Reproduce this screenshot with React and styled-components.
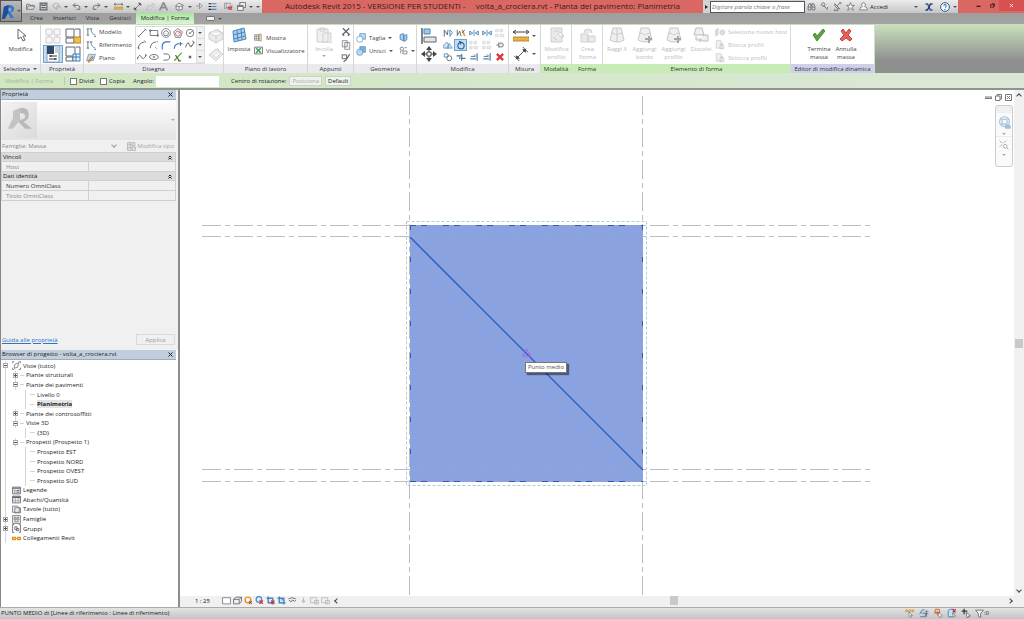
import styled, { createGlobalStyle } from "styled-components";

const GlobalStyle = createGlobalStyle`
  * {
    box-sizing: border-box;
  }

  html, body, #root {
    height: 100%;
  }

  body {
    margin: 0;
    overflow: hidden;
    font-family: "Open Sans", "Noto Sans", sans-serif;
    font-size: 6px;
    line-height: 8px;
    color: #333;
  }

  button, input, select {
    font: inherit;
    color: inherit;
    margin: 0;
    padding: 0;
    border: 0;
    background: none;
  }

  ul, h2 {
    margin: 0;
    padding: 0;
    font: inherit;
    list-style: none;
  }
`;

const blue = "#4a86bb";
const dark = "#60666f";
const ghost = "#cfcfcf";

// Every drawing sits in a 16 x 16 box
const drawings = {
  open: <path d="M1 13V4h5l1 2h6v2M1 13l3-6h12l-3 6z" fill="#ddd" stroke={dark} strokeWidth="1.3" />,
  save: (
    <g fill="none" stroke={dark} strokeWidth="2">
      <path d="M2 2h12v12H2z" />
      <path d="M5 2v4h6V2M4 10h8" />
    </g>
  ),
  sync: (
    <g fill="none" stroke="#aaa" strokeWidth="1.5">
      <path d="M2 4l5-2 5 2v5l-5 3-5-3z" />
      <path d="M9 14a4 4 0 1 1 6-3" />
    </g>
  ),
  undo: <path d="M6 2L2 6l4 4M2 6h8q5 0 4 7H8" fill="none" stroke={dark} strokeWidth="1.6" />,
  redo: <path d="M10 2l4 4-4 4M14 6H6q-5 0-4 7h6" fill="none" stroke={dark} strokeWidth="1.6" />,
  ruler: (
    <g>
      <path d="M0 4h16M3 2L0 4l3 2M13 2l3 2-3 2" fill="none" stroke="#444" />
      <path d="M0 9h16v4H0z" fill="#eab142" stroke="#b48a3a" />
    </g>
  ),
  dimension: (
    <g stroke="#444" fill="#444">
      <path d="M2 14L14 2M0 10l6 6M10 0l6 6" />
      <path d="M3 13v-3l3 3zM13 3v3l-3-3z" />
    </g>
  ),
  tag: <path d="M1 14l3-8 4 2 4-6 3 4-5 4-2 4-4-1z" fill="#ddd" stroke="#aaa" />,
  letter: <path d="M1 15L8 1l7 14M4 10h8" fill="none" stroke="#8d8d8d" strokeWidth="3" />,
  house: <path d="M1 7l6-5 8 4-2 1v6l-6 2-5-2V7zM7 8v6M2 7l5 1 6-1" fill="#eee" stroke={dark} strokeWidth="1.3" />,
  section: <path d="M8 2l5 5-5 5M8 2v10M2 7h6" fill="none" stroke="#8a8a8a" strokeWidth="1.5" />,
  thin: (
    <g strokeWidth="2">
      <path d="M1 3h5M1 8h5M1 13h5" stroke="#222" />
      <path d="M7 3h8M7 8h8M7 13h8" stroke={blue} />
    </g>
  ),
  closeHidden: (
    <g>
      <path d="M1 12V2h10v9H1M4 2v8h10V5" fill="#eee" stroke={dark} />
      <path d="M8 8l6 6M14 8l-6 6" stroke="#d43b3b" strokeWidth="2.5" />
    </g>
  ),
  windows: <path d="M5 6V1h10v9h-4M1 6h10v9H1zM1 8h10" fill="#f5f5f5" stroke={dark} strokeWidth="1.5" />,
  binoculars: <path d="M2 14V8l2-5h3v11zM9 14V3h3l2 5v6zM7 6h2M2 9h5M9 9h5" fill="#ddd" stroke={dark} strokeWidth="1.5" />,
  key: <path d="M6 6l8 8M12 12l2-3M4 2a3 3 0 1 1 0 5 3 3 0 0 1 0-5z" fill="none" stroke={dark} strokeWidth="1.5" />,
  satellite: <path d="M3 3q0 8 9 9zM7 7l5-5M4 12l-2 3h7l-1-3M11 1h3v3" fill="none" stroke={dark} strokeWidth="1.4" />,
  star: <path d="M8 1l2 5h5l-4 3 2 6-5-4-5 4 2-6-4-3h5z" fill="#f4f4f4" stroke={dark} strokeWidth="1.3" />,
  person: <path d="M8 1a4 4 0 0 1 2 7q5 1 5 6H1q0-5 5-6a4 4 0 0 1 2-7z" fill="#f2f2f2" stroke={dark} strokeWidth="1.3" />,
  exchange: (
    <g fill="none" strokeWidth="3">
      <path d="M1 2h4l6 12h4" stroke="#2a5f9f" />
      <path d="M15 2h-4L5 14H1" stroke="#27405e" />
    </g>
  ),
  help: (
    <g fill="none" stroke="#2e5f96" strokeWidth="1.6">
      <circle cx="8" cy="8" r="7" fill="#f4f8fc" />
      <path d="M6 6q0-2 2-2t2 2-2 3M8 11v2" />
    </g>
  ),
  cursor: <path d="M5 2v10l3-2 2 4 2-1-2-4h3z" fill="#fff" stroke={dark} />,
  typeProps: (
    <g>
      <path d="M1 1h8v8H1zM10 1h5v12h-5M1 10h8v5H1z" fill="#fafafa" stroke={dark} />
      <path d="M9 9h7v6H9z" fill="#f0bd45" stroke="#ba8629" />
    </g>
  ),
  family: (
    <g>
      <path d="M1 1h9v9H1zM11 1h4v7M1 11h7v4H1z" fill="#fafafa" stroke={dark} />
      <path d="M8 8h7v7H8zM8 11h7M11 8v7" fill="#e9f3fd" stroke="#3a7cb8" />
    </g>
  ),
  pasteType: <path d="M1 1h6v6H1zM9 1h6v6H9zM1 9h6v6H1zM9 9h6v6H9zM7 4h2M4 7v2M12 7v2" fill="#f7f7f7" stroke={ghost} />,
  properties: (
    <g>
      <path d="M2 0h12v16H2z" fill="#fff" stroke="#8ca2b8" />
      <path d="M2 0h7v8H2z" fill="#2f4864" />
      <path d="M10 2h3M10 4h3M10 6h3" stroke="#8ca2b8" />
      <path d="M4 10h8M4 13h8M6 9v2M10 12v2" stroke="#333" strokeWidth="1.2" />
    </g>
  ),
  modelLine: (
    <g fill="none" strokeWidth="1.4">
      <path d="M3 3v10M1 3h4M1 13h4" stroke={dark} />
      <path d="M8 3q0 8 7 10" stroke={blue} />
      <path d="M6 3h4M13 15h3" stroke={dark} />
    </g>
  ),
  plane: (
    <g>
      <path d="M4 2h11l-3 10H1z" fill="#bdd9ef" stroke={blue} />
      <path d="M3 14l7-9 2 2-7 8z" fill="#f0a13a" stroke="#a8691c" />
    </g>
  ),
  line: <path d="M2 14L14 2M1 12l3 3M12 1l3 3" stroke={dark} strokeWidth="1.5" />,
  rect: <path d="M2 4h12v8H2zM1 3h2v2H1zM13 11h2v2h-2z" fill="none" stroke={dark} strokeWidth="1.3" />,
  polyIn: <path d="M8 1a7 7 0 1 1-.1 0zM8 4l4 3-1 5H5L4 7zM8 8v1" fill="none" stroke={dark} strokeWidth="1.2" />,
  polyOut: (
    <g fill="none" strokeWidth="1.2">
      <path d="M8 1l7 5-3 9H4L1 6z" stroke={dark} />
      <circle cx="8" cy="9" r="4" stroke="#b55" />
      <path d="M8 9l4-3" stroke="#b55" />
    </g>
  ),
  circle: (
    <g fill="none" stroke={dark} strokeWidth="1.3">
      <circle cx="8" cy="8" r="6" />
      <path d="M7 9l6-5M6 8h2v2" />
    </g>
  ),
  arc: <path d="M2 14q0-9 10-11M1 12h2v3M12 1l2 3" fill="none" stroke={dark} strokeWidth="1.5" />,
  arcCenter: <path d="M2 13q1-9 9-10M10 12h1M12 14h1M13 2v2" fill="none" stroke={dark} strokeWidth="1.5" />,
  arcTangent: <path d="M2 15V9q1-6 7-6h6" fill="none" stroke="#2f7bb8" strokeWidth="1.8" />,
  fillet: (
    <g fill="none" strokeWidth="1.8">
      <path d="M2 14q0-8 8-8" stroke="#2f7bb8" />
      <path d="M10 6h5M12 3v6" stroke="#2f7bb8" />
    </g>
  ),
  spline: <path d="M1 12q3-12 6-4t7-5M12 1l3 4M5 5h2M9 9h2" fill="none" stroke={dark} strokeWidth="1.5" />,
  wave: <path d="M1 10q3-8 6-2t8-3M1 9v3M14 3v4" fill="none" stroke={dark} strokeWidth="1.5" />,
  ellipse: <path d="M8 4a7 4 0 1 1-.1 0zM8 7v2M6 8h4" fill="none" stroke={dark} strokeWidth="1.4" />,
  semi: <path d="M4 3h3q7 0 7 5t-7 5H4" fill="none" stroke={dark} strokeWidth="1.5" />,
  pick: (
    <g fill="none" strokeWidth="2">
      <path d="M2 14L14 1" stroke="#62a33e" />
      <path d="M4 5l6 9M8 14h5" stroke="#4c7c39" />
    </g>
  ),
  point: <path d="M6 6h4v4H6z" fill={dark} />,
  face: <path d="M1 5l7-3 7 3v6l-7 4-7-4zM1 5l7 3 7-3M8 8v7M9 1l4 3" fill="#ececec" stroke={ghost} />,
  facePlane: <path d="M1 9l7-6 7 5-7 7zM9 2l3 3M5 9l3 3 4-4" fill="#ececec" stroke={ghost} />,
  grid: (
    <g>
      <path d="M2 4l11-3 2 11-12 3z" fill="#a9d0ee" stroke={blue} />
      <path d="M2 8l12-3M3 12l11-3M6 3l1 11M10 2l1 11" stroke={blue} />
    </g>
  ),
  show: (
    <g>
      <path d="M1 3h10v10H1zM1 6h10M1 10h10M4 3v10M8 3v10" fill="#fff" stroke={dark} />
      <path d="M9 2h4v12H9z" fill="#f4d898" stroke="#8b7f68" />
    </g>
  ),
  viewer: (
    <g>
      <path d="M1 2h14v12H1z" fill="#fff" stroke={dark} strokeWidth="1.5" />
      <path d="M4 4l8 8M12 4l-8 8" stroke="#3e9f62" strokeWidth="3" />
    </g>
  ),
  paste: <path d="M1 2h11v13H1zM4 1h5v3H4zM7 6h8v10H7z" fill="#efefef" stroke={ghost} />,
  cut: <path d="M3 2l10 10M13 2L3 12M2 11l3 3M11 14l3-3" stroke={dark} strokeWidth="2" />,
  copy: <path d="M2 1h8v10H2zM6 4h8v11H6z" fill="#f2f2f2" stroke={dark} />,
  match: (
    <g strokeWidth="2" fill="none">
      <path d="M2 3h7v6H2z" stroke="#888" />
      <path d="M14 2L8 11l-4 3" stroke={dark} />
    </g>
  ),
  cutGeometry: (
    <g stroke={blue}>
      <path d="M6 1h9v9H6z" fill="#b8d9f1" />
      <circle cx="6" cy="10" r="5" fill="#fff" />
    </g>
  ),
  join: (
    <g stroke={blue}>
      <path d="M6 1h9v9H6z" fill="#79b4e0" />
      <circle cx="6" cy="10" r="5" fill="#b8d9f1" />
    </g>
  ),
  split: <path d="M2 3l6-2v13l-6-3zM9 4l5-1v9l-5 3z" fill="#a8cde9" stroke={blue} strokeWidth="1.5" />,
  paint: <path d="M2 5a3 3 0 0 1 6 0 3 3 0 0 1-6 0zM7 9h7v5H7zM10 3h4M3 9v4" fill="none" stroke={dark} strokeWidth="1.3" />,
  align: (
    <g>
      <path d="M1 0v16" stroke="#333" strokeWidth="1.2" />
      <path d="M3 1h6v5H3z" fill="#9dcaef" stroke={blue} />
      <path d="M3 9h12v5H3z" fill="#e5e5e5" stroke={dark} />
    </g>
  ),
  move: (
    <g fill="#444">
      <path d="M8 0l3 4H5zM8 16l3-4H5zM0 8l4-3v6zM16 8l-4-3v6z" />
      <path d="M8 4v8M4 8h8" stroke="#444" />
      <path d="M6 6h4v4H6z" fill="#fff" stroke="#444" />
    </g>
  ),
  offset: (
    <g fill="none" strokeWidth="1.5">
      <path d="M2 14V3l5 8 1-8" stroke={dark} />
      <path d="M11 14V3l4 4-3 5" stroke={blue} />
    </g>
  ),
  mirrorPick: (
    <g fill="none" strokeWidth="1.5">
      <path d="M2 3v9l4-7 2 8" stroke={dark} />
      <path d="M10 3l4 10" stroke="#db9d32" strokeWidth="2.5" />
      <path d="M14 3l-4 5" stroke={dark} />
    </g>
  ),
  mirror: <path d="M1 5l5 3-5 3zM15 5l-5 3 5 3zM8 3v10" fill="#d6e9f9" stroke={blue} strokeWidth="1.4" />,
  array: <path d="M1 2h4v4H1zM8 2h4v4H8zM8 10h6v4H8zM1 10h4v4H1z" fill="#eee" stroke={ghost} />,
  copyTool: <path d="M1 13V8l5-5 3 5v5zM6 13l4-8 5 8z" fill="#cfe3f4" stroke={blue} />,
  rotate: (
    <g fill="none" stroke="#205f98" strokeWidth="1.7">
      <circle cx="8" cy="9" r="5" />
      <path d="M5 2l4 2-3 3" />
    </g>
  ),
  pin: <path d="M2 8h4M6 4v8M6 5h6q3 3 0 6H6" fill="#eee" stroke={dark} strokeWidth="1.3" />,
  scale: (
    <g fill="none" strokeWidth="1.4">
      <path d="M2 3h6v5H2z" stroke={blue} />
      <circle cx="10" cy="10" r="4" stroke={dark} />
    </g>
  ),
  trim: (
    <g fill="none" strokeWidth="2">
      <path d="M1 6h9M9 10h6" stroke={dark} />
      <path d="M9 3v11M6 11V8" stroke={blue} />
    </g>
  ),
  trimCorner: (
    <g fill="none" strokeWidth="2">
      <path d="M13 2v12M2 11h9" stroke={blue} />
      <path d="M3 7h7M8 4l3 3" stroke={dark} strokeWidth="1.5" />
    </g>
  ),
  remove: <path d="M3 3l10 10M13 3L3 13" stroke="#dc3438" strokeWidth="3.5" />,
  editProfile: <path d="M2 1h11v14H2zM5 4h5M9 7l4 4 2-2-4-4zM4 10l4 3" fill="#e9e9e9" stroke={ghost} />,
  createForm: <path d="M4 6a4 4 0 1 1 8 0M1 7h7v8H1zM8 9h7v6H8z" fill="#e9e9e9" stroke={ghost} />,
  form: <path d="M4 1h8l3 12q-7 4-14 0zM3 6q5 3 10 0M8 2v13" fill="#efefef" stroke="#c8c8c8" />,
  formAdd: (
    <g>
      <path d="M4 1h8l3 12q-7 4-14 0zM3 6q5 3 10 0" fill="#efefef" stroke="#c8c8c8" />
      <path d="M12 9v7M8 12h7" stroke="#a5a5a5" strokeWidth="2" />
    </g>
  ),
  dissolve: <path d="M3 1h6l2 7H1zM9 8h6v6H9M3 9v4h5M6 11l3 2-3 2" fill="#efefef" stroke="#bdbdbd" />,
  host: <path d="M1 5l4-3v10l-4 2zM8 8a4 4 0 1 0 7-2 4 4 0 0 0-7 2z" fill="#ddd" stroke="#c4c4c4" />,
  lock: <path d="M2 1h7l2 3v9H2zM8 8h6v6H8zM9 8V6h3v2" fill="#f0f0f0" stroke="#c4c4c4" />,
  check: <path d="M2 8l4 6L14 4l-2-2-6 7-2-3z" fill="#5aa33f" stroke="#4a8c36" />,
  cancel: <path d="M3 4l2-2 3 4 3-4 2 2-3 4 4 4-2 2-4-3-4 3-2-2 4-4z" fill="#e8605c" stroke="#c8403d" />,
  editType: <path d="M1 1h6v14H1zM9 1h5v6H9zM9 9h6v6H9zM1 5h6M1 10h6" fill="#e5e5e5" stroke="#999" />,
  views: (
    <g fill="none" stroke={dark} strokeWidth="1.3">
      <path d="M5 6l7-3-2 8-6 2z" />
      <path d="M1 4V1h3M12 1h3v3M1 12v3h3M15 12v3h-3" />
    </g>
  ),
  legend: (
    <g>
      <path d="M1 2h14v12H1z" fill="#e9e9ee" stroke={dark} strokeWidth="1.5" />
      <path d="M1 4h14M4 8h2M8 8h5M4 11h2M8 11h5" stroke={dark} strokeWidth="2" />
    </g>
  ),
  schedule: (
    <g>
      <path d="M1 2h14v12H1z" fill="#f4f4f4" stroke={dark} strokeWidth="1.5" />
      <path d="M1 4h14" stroke={dark} strokeWidth="3" />
      <path d="M1 10h14M6 4v10M11 4v10" stroke="#888" />
    </g>
  ),
  sheet: <path d="M1 2h9l3 3v8H1zM5 5h10v9H5z" fill="#ececf0" stroke={dark} strokeWidth="1.3" />,
  families: <path d="M1 1h14v14H1zM4 4h3v5H4zM9 4h3v5H9zM4 12h8" fill="#f4f4f4" stroke={dark} strokeWidth="1.3" />,
  groups: <path d="M4 1H1v14h3M12 1h3v14h-3M5 5h4v5H5zM8 8h4v4H8z" fill="none" stroke={dark} strokeWidth="1.5" />,
  link: <path d="M1 6h5v4H1zM10 6h5v4h-5zM6 8h4" fill="#f7d083" stroke="#d9952c" strokeWidth="2" />,
  detail: <path d="M1 3h14v11H1z" fill="#fff" stroke={dark} strokeWidth="1.3" />,
  box3d: <path d="M1 6h10v8H1zM1 6l4-4h10v8l-4 4M11 6l4-4" fill="#eee" stroke={dark} strokeWidth="1.5" />,
  sun: (
    <g>
      <circle cx="7" cy="7" r="5" fill="#fff" stroke="#e5902b" strokeWidth="2.500" />
      <path d="M9 9l5 5M14 9l-5 5" stroke="#b65a1b" strokeWidth="2" />
    </g>
  ),
  shadow: (
    <g>
      <circle cx="7" cy="6" r="5" fill="#d9ecfa" stroke={blue} strokeWidth="2" />
      <path d="M8 8l6 6M14 8l-6 6" stroke="#cf3340" strokeWidth="2.5" />
    </g>
  ),
  crop: (
    <g fill="none">
      <path d="M4 1v11h11M1 4h11v11" stroke={blue} strokeWidth="2.5" />
      <path d="M9 8l6 6M15 8l-6 6" stroke="#cf3340" strokeWidth="2" />
    </g>
  ),
  cropView: (
    <g fill="none">
      <path d="M4 1v11h11M1 4h11v11" stroke={blue} strokeWidth="2.5" />
      <path d="M7 8a3 3 0 1 1 1 4" stroke="#5a96cc" strokeWidth="2" />
    </g>
  ),
  glasses: <path d="M1 5q6-4 13 0M2 7q3 6 6 0 4 5 6 0" fill="none" stroke={dark} strokeWidth="1.6" />,
  bulb: <path d="M8 3v7M5 8l3 4 3-4" fill="none" stroke="#aaa" strokeWidth="1.5" />,
  ghostBox: <path d="M1 3h11v9H1zM8 8h7v6H8z" fill="#eee" stroke="#b5b5b5" strokeWidth="1.4" />,
  selectLinks: (
    <g>
      <path d="M1 3h3v3H1zM6 3h3v3H6zM11 3h3v3h-3z" fill="#f3c14c" stroke="#c5952f" />
      <path d="M6 6l6 6-3 0 1 3-3-1z" fill="#fff" stroke={dark} />
    </g>
  ),
  selectUnder: (
    <g fill="none">
      <path d="M1 10l4-7h4M2 14h8V8H4" stroke={blue} strokeWidth="1.6" />
      <path d="M10 5h5M10 9h5M12 5v9" stroke={dark} strokeWidth="1.3" />
    </g>
  ),
  selectPin: (
    <g>
      <path d="M4 2h6l1 5H3zM7 7v5M2 8h9" fill="#f6c4a0" stroke="#b8602a" strokeWidth="1.3" />
      <path d="M9 7l6 6h-3l-1 3-2-3z" fill="#fff" stroke={dark} />
    </g>
  ),
  selectFace: (
    <g>
      <path d="M2 4l3-2h6v9l-3 3H2z" fill="#c5dff5" stroke={blue} strokeWidth="1.5" />
      <path d="M9 2l5 5M14 2L9 7" stroke="#cf3340" strokeWidth="2" />
      <path d="M9 8l5 5h-3l-1 2z" fill="#fff" stroke={dark} />
    </g>
  ),
  drag: (
    <g fill="none" stroke="#333">
      <path d="M5 1v9M1 5h9" strokeWidth="2" />
      <path d="M9 7l6 6h-3l-1 3-2-3z" fill="#fff" />
    </g>
  ),
  filter: <path d="M1 2h14l-5 6v7l-4-2V8z" fill="#f3f3f3" stroke={dark} strokeWidth="1.5" />,
  wheel: (
    <g fill="none">
      <path d="M8 1a6 6 0 1 0 0 12 6 6 0 0 0 0-12zM5 4h6v6H5z" stroke="#9bbcd6" strokeWidth="1.3" />
      <path d="M9 12h6v3H9z" fill="#a9c7de" stroke="#8fb0ca" />
    </g>
  ),
  zoom: <path d="M1 1l4 4M11 1L7 5M1 11l4-4M10 7a3 3 0 1 1-.1 0zM12 12l3 3" fill="none" stroke="#999" strokeWidth="1.3" />,
  revit: (
    <g>
      <path d="M3 3l5-2q6 0 6 4 0 3-4 4l4 6h-4L7 9v-1h1q3 0 3-2 0-2-3-2z" fill="#2e7bd3" />
      <path d="M3 3l5-2v8l-4 7H1z" fill="#1c4f9c" />
    </g>
  ),
  revitGrey: (
    <g>
      <path d="M4 3l5-2q4 0 4 4 0 3-3 4l5 4h-4L6 8q5 0 5-2t-3-2z" fill="#b9b9b9" />
      <path d="M4 3l4-2v7l-4 5H1l3-6z" fill="#c3c3c3" />
    </g>
  ),
};

const Glyph = styled.svg`
  display: block;
  flex: none;
  width: ${({ $size }) => $size}px;
  height: ${({ $size }) => $size}px;
`;

const Icon = ({ name, size = 10 }) => (
  <Glyph viewBox="0 0 16 16" $size={size} aria-hidden="true">
    {drawings[name]}
  </Glyph>
);

const Caret = styled.span`
  flex: none;
  width: 0;
  height: 0;
  border: 2px solid transparent;
  border-top-color: ${({ $muted }) => ($muted ? "#aaa" : "#555")};
  border-bottom: 0;
`;

const Window = styled.div`
  display: flex;
  flex-direction: column;
  height: 100%;
  background: #f0f0f0;
`;

/* ---------- title bar and tabs ---------- */

const Header = styled.header`
  flex: none;
  display: grid;
  grid-template-columns: 22px 1fr;
  grid-template-rows: 13px 11px;
  background: linear-gradient(#979797, #a4a4a4);
`;

const AppButton = styled.button`
  grid-row: 1 / 3;
  display: flex;
  align-items: center;
  justify-content: center;
  height: 22px;
  gap: 1px;
  border: 1px solid #555;
  background: linear-gradient(#b9b9b9, #909090);
`;

const TitleBar = styled.div`
  display: flex;
  background: #d96862;
`;

const QuickAccess = styled.div`
  display: flex;
  width: 240px;
  padding-left: 2px;
  background: linear-gradient(#ececec, #c6c6c6);
`;

const QuickButton = styled.button`
  display: flex;
  align-items: center;
  justify-content: center;
  width: ${({ $arrow }) => ($arrow ? 7 : 13)}px;
  margin-left: ${({ $gap }) => $gap || 0}px;
`;

const Title = styled.div`
  flex: 1;
  text-align: center;
  font-size: 8px;
  line-height: 12px;
  color: #3a1a1c;
  white-space: pre;
`;

const SearchBox = styled.div`
  display: flex;
  align-items: center;
  width: 102px;
  gap: 2px;
  background: #d2d2d2;
`;

const SideCaret = styled.span`
  margin-left: 2px;
  border: 2px solid transparent;
  border-left: 3px solid #222;
  border-right: 0;
`;

const SearchInput = styled.input`
  flex: 1;
  min-width: 0;
  height: 12px;
  padding: 0 1px;
  border: 1px solid #555;
  background: #fff;
  font-style: italic;

  &::placeholder {
    color: #777;
    opacity: 1;
  }
`;

const InfoCenter = styled.div`
  display: flex;
  align-items: center;
  width: 153px;
  background: linear-gradient(#ececec, #c6c6c6);
`;

const SignIn = styled.button`
  flex: 1;
  display: flex;
  align-items: center;
  justify-content: space-between;
  padding: 0 4px 0 0;
  color: #222;
`;

const WindowControls = styled.div`
  display: flex;
  justify-content: flex-end;
  width: 66px;
`;

const ControlButton = styled.button`
  display: flex;
  align-items: center;
  justify-content: center;
  width: ${({ $close }) => ($close ? 25 : 14)}px;
  height: 11px;
  color: ${({ $close }) => ($close ? "#fff" : "#3a1a1c")};
  background: ${({ $close }) => ($close ? "#d5504f" : "none")};

  svg {
    width: 5px;
    height: 5px;
    fill: none;
    stroke: currentColor;
    stroke-width: 2;
  }
`;

const Tabs = styled.nav`
  display: flex;
  align-items: stretch;
  padding-left: 3px;
`;

const Tab = styled.button`
  display: flex;
  padding: 1px 5px 0;
  color: ${({ $active }) => ($active ? "#222" : "#2a2a2a")};
  background: ${({ $active }) => ($active ? "linear-gradient(#a7e69a, #dff3d8)" : "none")};
`;

const TabMenu = styled.button`
  display: flex;
  align-items: center;
  gap: 3px;
  margin-left: 12px;

  i {
    width: 9px;
    height: 5px;
    border: 1px solid #777;
    border-radius: 1px;
    background: #eee;
  }
`;

/* ---------- ribbon ---------- */

const Ribbon = styled.div`
  flex: none;
  display: flex;
  height: 49px;
  border-top: 1px solid #c5dfba;
  background: linear-gradient(#c8dfbc, #8f8f8f 75%);
`;

const tones = {
  plain: "#e9e9ee",
  green: "#c7ecb5",
  violet: "#cdd0e8",
};

const PanelBox = styled.section`
  display: flex;
  flex-direction: column;
  width: ${({ $width }) => $width}px;
  border-right: 1px solid ${({ $tone }) => ($tone === "plain" ? "#d5d5d5" : "#cfe0c8")};
  background: #fff;
`;

const PanelBody = styled.div`
  flex: 1;
  display: flex;
  align-items: flex-start;
  padding: 0 2px;
  gap: ${({ $gap }) => $gap || 0}px;
`;

const PanelTitle = styled.h2`
  height: 9px;
  display: flex;
  align-items: center;
  justify-content: center;
  gap: 3px;
  background: ${({ $tone }) => tones[$tone]};
  white-space: nowrap;
`;

const Panel = ({ title, width, tone = "plain", gap, menu, children }) => (
  <PanelBox $width={width} $tone={tone}>
    <PanelBody $gap={gap}>{children}</PanelBody>
    <PanelTitle $tone={tone}>
      {title}
      {menu && <Caret />}
    </PanelTitle>
  </PanelBox>
);

const BigButton = styled.button`
  display: flex;
  flex-direction: column;
  align-items: center;
  width: ${({ $width }) => $width}px;
  flex: none;
  padding-top: 2px;
  gap: 2px;
  color: ${({ disabled }) => (disabled ? "#bbb" : "#444")};

  span {
    white-space: pre;
  }
`;

const Big = ({ icon, label, width, disabled, menu }) => (
  <BigButton $width={width} disabled={disabled}>
    <Icon name={icon} size={16} />
    {label && <span>{label}</span>}
    {menu && <Caret $muted={disabled} />}
  </BigButton>
);

const Stack = styled.div`
  display: flex;
  flex-direction: column;
  padding-top: ${({ $top }) => $top}px;
`;

const SmallButton = styled.button`
  display: flex;
  align-items: center;
  height: 13px;
  gap: 3px;
  white-space: nowrap;
  color: ${({ disabled }) => (disabled ? "#c0c0c0" : "#444")};
`;

const Small = ({ icon, label, disabled, menu, size = 10 }) => (
  <SmallButton disabled={disabled} aria-label={label || icon}>
    <Icon name={icon} size={size} />
    {label}
    {menu && <Caret $muted={disabled} />}
  </SmallButton>
);

const ToolGrid = styled.div`
  display: grid;
  grid-template-columns: repeat(${({ $columns }) => $columns}, ${({ $cell }) => $cell}px);
  grid-auto-rows: ${({ $row }) => $row}px;
  padding-top: 2px;
`;

const Tool = styled.button`
  display: flex;
  align-items: center;
  justify-content: center;
  border: 1px solid ${({ $on }) => ($on ? "#6fa3cf" : "transparent")};
  background: ${({ $on }) => ($on ? "#c3dcf2" : "none")};
`;

const Gallery = styled.div`
  display: flex;
  margin-top: 1px;
  border: 1px solid #dcdcdc;

  ${ToolGrid} {
    padding-top: 0;
  }
`;

const GalleryScroll = styled.div`
  display: grid;
  width: 8px;
  border-left: 1px solid #dcdcdc;

  button {
    display: flex;
    align-items: center;
    justify-content: center;
    background: #f1f1f1;
    border-bottom: 1px solid #dcdcdc;
  }
`;

/* ---------- options bar ---------- */

const OptionsBar = styled.div`
  flex: none;
  display: flex;
  align-items: center;
  height: 17px;
  padding: 1px 0 0 5px;
  border-bottom: 2px solid #8f948d;
  background: linear-gradient(90deg, #d0e7c2, #dbe7d6);
  color: #222;
`;

const OptionsLabel = styled.span`
  width: 60px;
  margin-right: 5px;
  border-right: 1px solid #b7cbab;
  color: #a3b39a;
`;

const CheckLabel = styled.label`
  display: flex;
  align-items: center;
  gap: 2px;
  width: 30px;

  input {
    appearance: none;
    width: 7px;
    height: 7px;
    border: 1px solid #777;
    background: #fff;
  }
`;

const AngleLabel = styled.label`
  display: flex;
  align-items: center;
  gap: 2px;
  margin: 0 12px 0 3px;

  input {
    width: 63px;
    height: 11px;
    background: #fff;
  }
`;

const OptionButton = styled.button`
  height: 10px;
  margin-left: 3px;
  padding: 0 2px;
  border: 1px solid #c9d3c4;
  background: #eef2ec;
  color: ${({ disabled }) => (disabled ? "#a9a9a9" : "#222")};
`;

/* ---------- side panels ---------- */

const Workspace = styled.div`
  flex: 1;
  display: flex;
  min-height: 0;
`;

const Sidebar = styled.aside`
  display: flex;
  flex-direction: column;
  width: 180px;
  border-left: 1px solid #888;
  border-right: 2px solid #8c8c8c;
`;

const PaneHeader = styled.h2`
  flex: none;
  display: flex;
  align-items: center;
  justify-content: space-between;
  height: 10px;
  padding: 0 3px 1px 1px;
  margin-right: 2px;
  border-bottom: 1px solid #a0acb8;
  background: #c0cedd;
  color: #222;

  svg {
    display: block;
    width: 5px;
    height: 5px;
    stroke: #222;
    stroke-width: 2;
  }
`;

const PaneClose = () => (
  <button aria-label="Chiudi">
    <svg viewBox="0 0 10 10">
      <path d="M1 1l8 8M9 1L1 9" />
    </svg>
  </button>
);

const Properties = styled.section`
  flex: none;
  display: flex;
  flex-direction: column;
  height: 260px;
  background: #f0f0f0;
`;

const TypeSelector = styled.button`
  display: flex;
  align-items: center;
  justify-content: space-between;
  height: 40px;
  margin-right: 2px;
  padding: 0 1px;
  background: linear-gradient(#fdfdfd, #e3e3e3);

  span:first-child {
    display: flex;
    align-items: center;
    justify-content: center;
    width: 35px;
    height: 36px;
    background: linear-gradient(135deg, #f2f2f2, #dadada);
  }
`;

const TypeRow = styled.div`
  display: flex;
  align-items: center;
  justify-content: space-between;
  height: 12px;
  padding-right: 4px;
  color: #888;

  label {
    display: flex;
    width: 118px;
  }

  select {
    appearance: none;
    flex: 1;
    padding-left: 1px;
    opacity: 1;
  }

  button {
    display: flex;
    align-items: center;
    gap: 2px;
    color: #a5a5a5;
  }
`;

const Chevron = styled.span`
  width: 4px;
  height: 4px;
  margin: 1px 3px 0 0;
  border: solid #999;
  border-width: 0 1px 1px 0;
  transform: rotate(45deg);
`;

const PropertyTable = styled.table`
  width: 175px;
  border-collapse: collapse;
  color: #333;

  th, td {
    height: 10px;
    padding: 0;
    border: 1px solid #d0d0d0;
    font-weight: 400;
    line-height: 8px;
    text-align: left;
  }

  th {
    width: 50%;
    padding-left: 4px;
  }

  td {
    width: 50%;
  }

  .group th {
    height: 9px;
    padding: 0 3px 0 1px;
    background: #dcdcdc;
    color: #111;
  }

  .group div {
    display: flex;
    justify-content: space-between;
    align-items: center;
  }

  .muted th {
    color: #888;
  }
`;

const DoubleUp = () => (
  <svg width="4" height="5" viewBox="0 0 8 10" fill="none" stroke="#222" strokeWidth="2">
    <path d="M1 5l3-3 3 3M1 9l3-3 3 3" />
  </svg>
);

const PropertiesFooter = styled.div`
  display: flex;
  align-items: center;
  justify-content: space-between;
  margin-top: auto;
  padding: 0 3px 5px 1px;

  a {
    color: #2a74c7;
  }

  button {
    width: 39px;
    height: 11px;
    border: 1px solid #dadada;
    color: #999;
  }
`;

const Browser = styled.section`
  flex: 1;
  display: flex;
  flex-direction: column;
  background: #fff;
`;

const Tree = styled.ul`
  display: grid;
  grid-auto-rows: minmax(0, 1fr);
  height: 182px;
  margin-top: 1px;
`;

const guide = "linear-gradient(#d5d5d5, #d5d5d5)";

const TreeRow = styled.li`
  display: flex;
  align-items: center;
  gap: 2px;
  padding-left: ${({ $level }) => [2, 12, 22][$level]}px;
  background:
    ${guide} 4px 0 / 1px 100% no-repeat,
    ${guide} ${({ $level }) => [4, 14, 24][$level]}px 0 / 1px 100% no-repeat;
  color: #222;

  strong {
    background: #e3e3e3;
  }
`;

const Expander = styled.button`
  flex: none;
  width: 5px;
  height: 5px;
  border: 1px solid #aaa;
  background:
    linear-gradient(#555, #555) center / 3px 1px no-repeat,
    linear-gradient(#555, #555) center / 1px ${({ $open }) => ($open ? 0 : 3)}px no-repeat,
    #fff;
`;

const Leaf = styled.span`
  flex: none;
  width: 5px;
`;

const Branch = styled.span`
  width: ${({ $level }) => [0, 4, 5][$level]}px;
  border-top: 1px solid #d5d5d5;
`;

/* ---------- drawing area ---------- */

const View = styled.main`
  flex: 1;
  min-width: 0;
  display: grid;
  grid-template-columns: 1fr 10px;
  grid-template-rows: 1fr 11px;
  background: #f0f0f0;
`;

const Canvas = styled.div`
  position: relative;
  min-height: 0;
  background: #fff;
`;

const Plan = styled.svg`
  display: block;
  position: absolute;
  width: 100%;
  height: 100%;
`;

const Tooltip = styled.div`
  position: absolute;
  left: calc(50% - 72px);
  top: calc(50% + 19px);
  padding: 0 2px;
  border: 1px solid #777;
  background: #fff;
  box-shadow: 2px 2px 1px rgba(0, 0, 0, 0.45);
  line-height: 9px;
  color: #555;
  white-space: nowrap;
`;

const ViewButtons = styled.div`
  position: absolute;
  top: 4px;
  right: 2px;
  display: flex;
  gap: 3px;

  svg {
    display: block;
    width: 7px;
    height: 7px;
    fill: none;
    stroke: #777;
    stroke-width: 2;
  }
`;

const NavigationBar = styled.div`
  position: absolute;
  top: 15px;
  right: 1px;
  display: flex;
  flex-direction: column;
  align-items: center;
  justify-content: space-between;
  width: 18px;
  height: 62px;
  padding: 10px 0;
  border: 1px solid #ccc;
  border-radius: 3px;
  background: linear-gradient(#f0f0f0 7px, #fafafa 7px, #fafafa 30px, #ddd 30px, #fafafa 31px);
`;

const VerticalScroll = styled.div`
  display: flex;
  flex-direction: column;
  justify-content: space-between;
  align-items: center;
  padding: 4px 0;
  background: #f1f1f1;
`;

const Thumb = styled.span`
  width: 8px;
  height: 9px;
  background: #c9c9c9;
`;

const Arrow = styled.span`
  width: 4px;
  height: 4px;
  border: solid #444;
  border-width: 1px 1px 0 0;
  transform: rotate(${({ $turn }) => $turn}deg);
`;

const ViewBar = styled.div`
  display: flex;
  align-items: center;
  padding: 0 2px 2px 15px;
  color: #111;
`;

const Scale = styled.button`
  width: 27px;
  text-align: left;
`;

const ViewTool = styled.button`
  width: 11px;
`;

const HorizontalScroll = styled.div`
  flex: 1;
  display: flex;
  align-items: center;
  justify-content: space-between;
  padding-left: 3px;
`;

const StatusBar = styled.footer`
  flex: none;
  display: flex;
  align-items: center;
  justify-content: space-between;
  height: 12px;
  padding: 0 35px 1px 1px;
  border-top: 1px solid #aaa;
  background: linear-gradient(#e4e4e4, #c3c3c3);
  color: #222;
`;

const StatusTools = styled.div`
  display: flex;
  gap: 4px;

  button {
    display: flex;
    align-items: center;
  }
`;

const quickTools = [
  ["open"], ["save"], ["sync"], ["arrow"], ["undo"], ["arrow"], ["redo"], ["arrow"],
  ["ruler", 2], ["arrow"], ["dimension"], ["tag"], ["letter"], ["house", 3], ["arrow"],
  ["section"], ["thin"], ["closeHidden", 3], ["windows"], ["arrow"], ["arrow"],
];

const drawTools = [
  "line", "rect", "polyIn", "polyOut", "circle",
  "arc", "arcCenter", "arcTangent", "fillet", "spline",
  "wave", "ellipse", "semi", "pick", "point",
];

const modifyTools = [
  "offset", "mirrorPick", "mirror", "mirror", "array",
  "copyTool", "rotate", "array", "array", "pin",
  "scale", "trim", "trimCorner", "trimCorner", "remove",
];

const viewTools = [
  "detail", "box3d", "sun", "shadow", "crop", "cropView", "glasses", "bulb", "ghostBox", "ghostBox",
];

const tree = [
  { level: 0, label: "Viste (tutto)", icon: "views", state: "open" },
  { level: 1, label: "Piante strutturali", state: "closed" },
  { level: 1, label: "Piante dei pavimenti", state: "open" },
  { level: 2, label: "Livello 0" },
  { level: 2, label: "Planimetria", current: true },
  { level: 1, label: "Piante dei controsoffitti", state: "closed" },
  { level: 1, label: "Viste 3D", state: "open" },
  { level: 2, label: "{3D}" },
  { level: 1, label: "Prospetti (Prospetto 1)", state: "open" },
  { level: 2, label: "Prospetto EST" },
  { level: 2, label: "Prospetto NORD" },
  { level: 2, label: "Prospetto OVEST" },
  { level: 2, label: "Prospetto SUD" },
  { level: 0, label: "Legende", icon: "legend" },
  { level: 0, label: "Abachi/Quantità", icon: "schedule" },
  { level: 0, label: "Tavole (tutto)", icon: "sheet" },
  { level: 0, label: "Famiglie", icon: "families", state: "closed" },
  { level: 0, label: "Gruppi", icon: "groups", state: "closed" },
  { level: 0, label: "Collegamenti Revit", icon: "link" },
];

const TopBar = () => (
  <Header>
    <AppButton aria-label="Menu applicazione">
      <Icon name="revit" size={15} />
      <Caret />
    </AppButton>
    <TitleBar>
      <QuickAccess>
        {quickTools.map(([name, gap], i) => (
          <QuickButton key={i} $arrow={name === "arrow"} $gap={gap} aria-label={name}>
            {name === "arrow" ? <Caret /> : <Icon name={name} size={9} />}
          </QuickButton>
        ))}
      </QuickAccess>
      <Title>
        {"Autodesk Revit 2015 - VERSIONE PER STUDENTI -     volta_a_crociera.rvt - Pianta del pavimento: Planimetria"}
      </Title>
      <SearchBox>
        <SideCaret />
        <SearchInput placeholder="Digitare parola chiave o frase" aria-label="Cerca" />
      </SearchBox>
      <InfoCenter>
        {["binoculars", "key", "satellite", "star", "person"].map((name) => (
          <QuickButton key={name} aria-label={name}>
            <Icon name={name} size={9} />
          </QuickButton>
        ))}
        <SignIn>
          Accedi
          <Caret />
        </SignIn>
        <QuickButton aria-label="Exchange Apps">
          <Icon name="exchange" size={8} />
        </QuickButton>
        <QuickButton $gap={3} aria-label="Guida">
          <Icon name="help" size={10} />
        </QuickButton>
        <QuickButton $arrow aria-label="Menu guida">
          <Caret />
        </QuickButton>
      </InfoCenter>
      <WindowControls>
        <ControlButton aria-label="Riduci">
          <svg viewBox="0 0 12 12"><path d="M1 8h10" strokeWidth="3" /></svg>
        </ControlButton>
        <ControlButton aria-label="Ripristina">
          <svg viewBox="0 0 12 12"><path d="M1 4h8v6H1zM4 2h7v6" /></svg>
        </ControlButton>
        <ControlButton $close aria-label="Chiudi">
          <svg viewBox="0 0 12 12"><path d="M2 2l8 8M10 2l-8 8" /></svg>
        </ControlButton>
      </WindowControls>
    </TitleBar>
    <Tabs>
      <Tab>Crea</Tab>
      <Tab>Inserisci</Tab>
      <Tab>Vista</Tab>
      <Tab>Gestisci</Tab>
      <Tab $active>Modifica | Forma</Tab>
      <TabMenu aria-label="Riduci barra multifunzione">
        <i />
        <Caret />
      </TabMenu>
    </Tabs>
  </Header>
);

const RibbonBar = () => (
  <Ribbon>
    <Panel title="Seleziona" width={41} menu>
      <Big icon="cursor" label="Modifica" width={37} />
    </Panel>
    <Panel title="Proprietà" width={43}>
      <ToolGrid $columns={2} $cell={20} $row={18}>
        {["pasteType", "typeProps", "properties", "family"].map((name) => (
          <Tool key={name} $on={name === "properties"} aria-label={name}>
            <Icon name={name} size={16} />
          </Tool>
        ))}
      </ToolGrid>
    </Panel>
    <Panel title="Disegna" width={140} gap={3}>
      <Stack $top={0}>
        <Small icon="modelLine" label="Modello" />
        <Small icon="modelLine" label="Riferimento" />
        <Small icon="plane" label="Piano" />
      </Stack>
      <Gallery>
        <ToolGrid $columns={5} $cell={12} $row={12}>
          {drawTools.map((name, i) => (
            <Tool key={i} aria-label={name}>
              <Icon name={name} size={10} />
            </Tool>
          ))}
        </ToolGrid>
        <GalleryScroll>
          <button aria-label="Su"><Caret /></button>
          <button aria-label="Giù"><Caret /></button>
          <button aria-label="Altro"><Caret /></button>
        </GalleryScroll>
      </Gallery>
      <ToolGrid $columns={1} $cell={16} $row={18}>
        <Tool aria-label="Disegna su faccia"><Icon name="face" size={16} /></Tool>
        <Tool aria-label="Disegna su piano"><Icon name="facePlane" size={16} /></Tool>
      </ToolGrid>
    </Panel>
    <Panel title="Piano di lavoro" width={84} gap={2}>
      <Big icon="grid" label="Imposta" width={26} />
      <Stack $top={6}>
        <Small icon="show" label="Mostra" size={9} />
        <Small icon="viewer" label="Visualizzatore" size={9} />
      </Stack>
    </Panel>
    <Panel title="Appunti" width={46} gap={3}>
      <Big icon="paste" label="Incolla" width={28} disabled menu />
      <Stack $top={0}>
        <Small icon="cut" />
        <Small icon="copy" />
        <Small icon="match" />
      </Stack>
    </Panel>
    <Panel title="Geometria" width={63} gap={6}>
      <Stack $top={6}>
        <Small icon="cutGeometry" label="Taglia" menu />
        <Small icon="join" label="Unisci" menu />
      </Stack>
      <Stack $top={6}>
        <Small icon="split" size={9} />
        <Small icon="paint" size={9} menu />
      </Stack>
    </Panel>
    <Panel title="Modifica" width={92} gap={2}>
      <ToolGrid $columns={1} $cell={20} $row={18}>
        <Tool aria-label="Allinea"><Icon name="align" size={16} /></Tool>
        <Tool aria-label="Sposta"><Icon name="move" size={16} /></Tool>
      </ToolGrid>
      <ToolGrid $columns={5} $cell={13} $row={12}>
        {modifyTools.map((name, i) => (
          <Tool key={i} $on={name === "rotate"} aria-label={name}>
            <Icon name={name} size={10} />
          </Tool>
        ))}
      </ToolGrid>
    </Panel>
    <Panel title="Misura" width={32}>
      <ToolGrid $columns={1} $cell={20} $row={18}>
        <Tool aria-label="Misura"><Icon name="ruler" size={16} /></Tool>
        <Tool aria-label="Quota"><Icon name="dimension" size={14} /></Tool>
      </ToolGrid>
      <ToolGrid $columns={1} $cell={6} $row={18}>
        <Tool aria-label="Menu misura"><Caret /></Tool>
        <Tool aria-label="Menu quota"><Caret /></Tool>
      </ToolGrid>
    </Panel>
    <Panel title="Modalità" width={31} tone="green">
      <Big icon="editProfile" label={"Modifica\nprofilo"} width={27} disabled />
    </Panel>
    <Panel title="Forma" width={31} tone="green">
      <Big icon="createForm" label={"Crea\nforma"} width={27} disabled />
    </Panel>
    <Panel title="Elemento di forma" width={188} tone="green" gap={2}>
      <Big icon="form" label="Raggi X" width={24} disabled />
      <Big icon="formAdd" label={"Aggiungi\nbordo"} width={27} disabled />
      <Big icon="formAdd" label={"Aggiungi\nprofilo"} width={27} disabled />
      <Big icon="dissolve" label="Dissolvi" width={24} disabled />
      <Stack $top={0}>
        <Small icon="host" label="Seleziona nuovo host" disabled />
        <Small icon="lock" label="Blocca profili" disabled />
        <Small icon="lock" label="Sblocca profili" disabled />
      </Stack>
    </Panel>
    <Panel title="Editor di modifica dinamica" width={84} tone="violet">
      <PanelBody />
      <Big icon="check" label={"Termina\nmassa"} width={27} />
      <Big icon="cancel" label={"Annulla\nmassa"} width={27} />
      <PanelBody />
    </Panel>
  </Ribbon>
);

const Options = () => (
  <OptionsBar>
    <OptionsLabel>Modifica | Forma</OptionsLabel>
    <CheckLabel><input type="checkbox" />Dividi</CheckLabel>
    <CheckLabel><input type="checkbox" />Copia</CheckLabel>
    <AngleLabel>Angolo:<input type="text" /></AngleLabel>
    Centro di rotazione:
    <OptionButton disabled>Posiziona</OptionButton>
    <OptionButton>Default</OptionButton>
  </OptionsBar>
);

const PropertiesPane = () => (
  <Properties>
    <PaneHeader>Proprietà<PaneClose /></PaneHeader>
    <TypeSelector aria-label="Selettore tipo">
      <span><Icon name="revitGrey" size={28} /></span>
      <Caret $muted />
    </TypeSelector>
    <TypeRow>
      <label>
        <select aria-label="Famiglia" disabled>
          <option>Famiglia: Massa</option>
        </select>
        <Chevron />
      </label>
      <button disabled><Icon name="editType" size={9} />Modifica tipo</button>
    </TypeRow>
    <PropertyTable>
      <tbody>
        <tr className="group"><th colSpan={2}><div>Vincoli<DoubleUp /></div></th></tr>
        <tr className="muted"><th>Host</th><td /></tr>
        <tr className="group"><th colSpan={2}><div>Dati identità<DoubleUp /></div></th></tr>
        <tr><th>Numero OmniClass</th><td /></tr>
        <tr className="muted"><th>Titolo OmniClass</th><td /></tr>
      </tbody>
    </PropertyTable>
    <PropertiesFooter>
      <a href="#guida">Guida alle proprietà</a>
      <button disabled>Applica</button>
    </PropertiesFooter>
  </Properties>
);

const BrowserPane = () => (
  <Browser>
    <PaneHeader>Browser di progetto - volta_a_crociera.rvt<PaneClose /></PaneHeader>
    <Tree>
      {tree.map(({ level, label, icon, state, current }) => (
        <TreeRow key={label} $level={level}>
          {state ? <Expander $open={state === "open"} aria-label={label} /> : <Leaf />}
          <Branch $level={level} />
          {icon && <Icon name={icon} size={9} />}
          {current ? <strong>{label}</strong> : label}
        </TreeRow>
      ))}
    </Tree>
  </Browser>
);

const DrawingView = () => (
  <View>
    <Canvas>
      <Plan viewBox="180 90 834 506" preserveAspectRatio="xMidYMid meet">
        <g stroke="#bdbdbd" strokeDasharray="19 4 5 4">
          <path d="M409.500 96V596M642.500 96V596" />
          <path d="M202 225.500H874M202 236.500H874M202 469.500H874M202 481.500H874" />
        </g>
        <rect x="410" y="225" width="233" height="257" fill="#8aa2df" />
        <g stroke="#93a6ce" strokeDasharray="19 4 5 4">
          <path d="M410 236.500H643M410 469.500H643" />
        </g>
        <path d="M410 225.500H643M410 481.500H643" stroke="#3559a6" strokeDasharray="6 5 6 16" />
        <path d="M410.500 225V482M642.500 225V482" stroke="#3559a6" strokeDasharray="5 27" />
        <rect x="406.500" y="221.500" width="240" height="264" fill="none" stroke="#a9cbe0" strokeDasharray="3 2" />
        <path d="M410 237L643 470" stroke="#2c62c2" strokeWidth="1.5" />
        <path d="M526.500 349l4 7h-8z" fill="none" stroke="#b05fe0" />
      </Plan>
      <Tooltip role="tooltip">Punto medio</Tooltip>
      <ViewButtons>
        <button aria-label="Riduci vista"><svg viewBox="0 0 14 14"><path d="M0 6h14v3H0z" /></svg></button>
        <button aria-label="Ripristina vista"><svg viewBox="0 0 14 14"><path d="M1 4h9v9H1zM4 4V1h9v9h-3" /></svg></button>
        <button aria-label="Chiudi vista"><svg viewBox="0 0 14 14"><path d="M1 1h12v12H1zM4 4l6 6M10 4l-6 6" /></svg></button>
      </ViewButtons>
      <NavigationBar>
        <Icon name="wheel" size={13} />
        <Caret $muted />
        <Icon name="zoom" size={10} />
        <Caret $muted />
      </NavigationBar>
    </Canvas>
    <VerticalScroll>
      <Arrow $turn={-45} />
      <Thumb />
      <Arrow $turn={135} />
    </VerticalScroll>
    <ViewBar>
      <Scale>1 : 25</Scale>
      {viewTools.map((name, i) => (
        <ViewTool key={i} aria-label={name}><Icon name={name} size={9} /></ViewTool>
      ))}
      <HorizontalScroll>
        <Arrow $turn={-135} />
        <Thumb />
        <Arrow $turn={45} />
      </HorizontalScroll>
    </ViewBar>
  </View>
);

const App = () => (
  <Window>
    <GlobalStyle />
    <TopBar />
    <RibbonBar />
    <Options />
    <Workspace>
      <Sidebar>
        <PropertiesPane />
        <BrowserPane />
      </Sidebar>
      <DrawingView />
    </Workspace>
    <StatusBar>
      PUNTO MEDIO di [Linee di riferimento : Linee di riferimento)
      <StatusTools>
        {["selectLinks", "selectUnder", "selectPin", "selectFace", "drag"].map((name) => (
          <button key={name} aria-label={name}><Icon name={name} size={10} /></button>
        ))}
        <button><Icon name="filter" size={9} />:0</button>
      </StatusTools>
    </StatusBar>
  </Window>
);

export default App;
